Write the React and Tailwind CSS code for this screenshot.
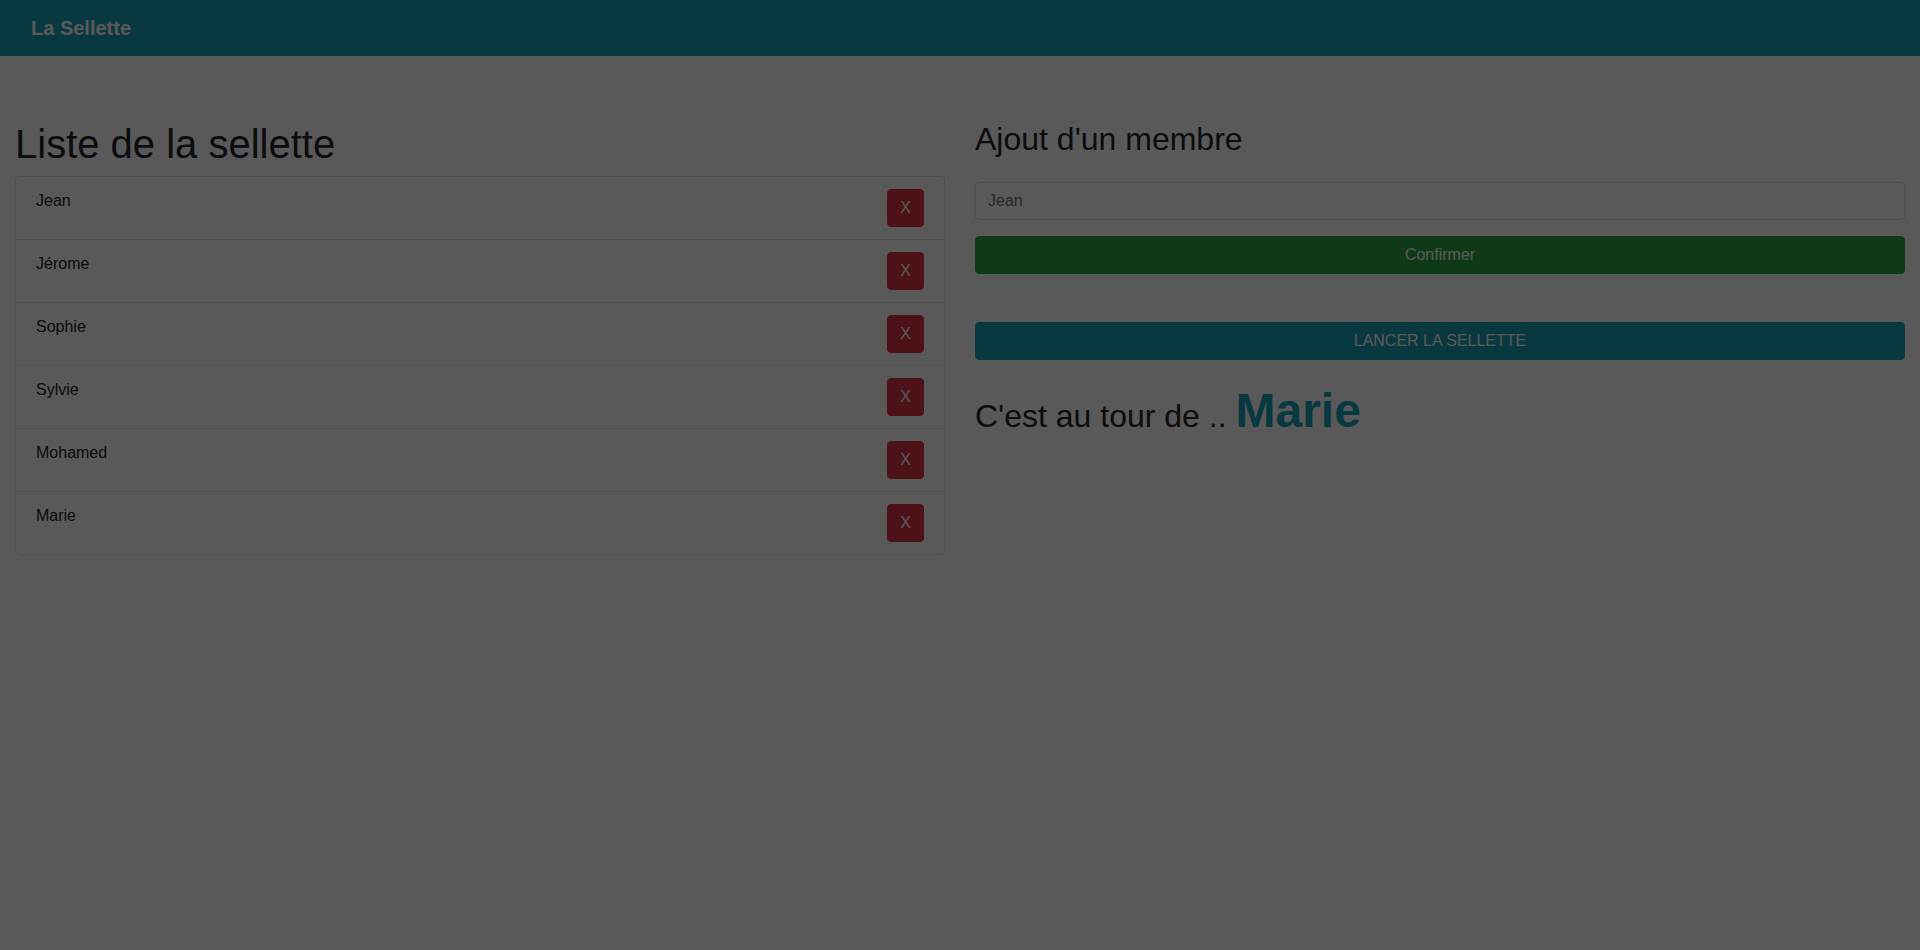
import { useState } from 'react';

const members = ['Jean', 'Jérome', 'Sophie', 'Sylvie', 'Mohamed', 'Marie'];

const App = () => {
  const [list, setList] = useState(members);
  const [name, setName] = useState('');

  return (
    <div className="min-h-screen bg-white font-['Liberation_Sans',Arial,sans-serif] text-base leading-6 text-[#212529]">
      <nav className="flex h-14 items-center bg-[#17a2b8] px-[31px]">
        <span className="text-xl font-bold leading-[30px] text-white">La Sellette</span>
      </nav>

      <main className="grid grid-cols-2 gap-[30px] px-[15px] pt-16">
        <section>
          <h1 className="mb-2 text-[40px] font-normal leading-[1.2]">Liste de la sellette</h1>
          <ul className="rounded border border-[#dfdfdf]">
            {list.map((m, i) => (
              <li
                key={m}
                className={`flex items-start justify-between px-5 py-3 ${i < list.length - 1 ? 'border-b border-[#dfdfdf]' : ''}`}
              >
                <span>{m}</span>
                <button
                  onClick={() => setList(list.filter((x) => x !== m))}
                  className="h-[38px] rounded border border-[#dc3545] bg-[#dc3545] px-3 leading-6 text-white"
                >
                  X
                </button>
              </li>
            ))}
          </ul>
        </section>

        <section>
          <h2 className="mb-2 text-[32px] font-normal leading-[1.2]">Ajout d'un membre</h2>
          <input
            type="text"
            value={name}
            onChange={(e) => setName(e.target.value)}
            placeholder="Jean"
            className="mt-6 block h-[38px] w-full rounded border border-[#ced4da] px-3 text-[#495057] placeholder:text-[#6c757d]"
          />
          <button className="mt-4 block h-[38px] w-full rounded border border-[#28a745] bg-[#28a745] text-white">
            Confirmer
          </button>
          <button className="mt-12 block h-[38px] w-full rounded border border-[#17a2b8] bg-[#17a2b8] text-white">
            LANCER LA SELLETTE
          </button>
          <h2 className="mt-[22px] text-[32px] font-normal leading-[1.2]">
            C'est au tour de ..{' '}
            <span className="text-5xl font-bold leading-[1.2] text-[#17a2b8]">Marie</span>
          </h2>
        </section>
      </main>

      {/* modal backdrop */}
      <div className="fixed inset-0 bg-black/65" />
    </div>
  );
};

export default App;
